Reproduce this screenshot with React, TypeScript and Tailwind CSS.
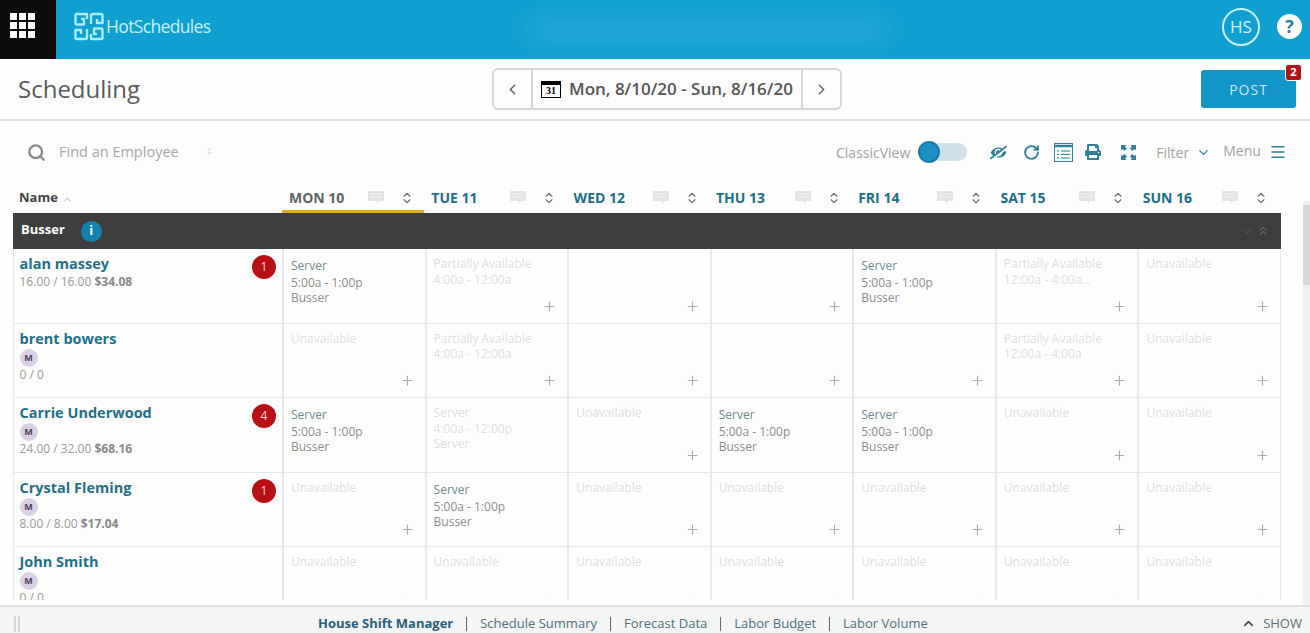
import { ChevronDown, ChevronLeft, ChevronRight, ChevronUp, ChevronsUp, ChevronsUpDown, Menu, Plus, RotateCw, Search } from "lucide-react";
import { FaEyeSlash, FaPrint } from "react-icons/fa";

type Cell =
  | { kind: "shift" }
  | { kind: "faint"; lines: string[]; plus: boolean }
  | { kind: "empty" };

const shift: Cell = { kind: "shift" };
const empty: Cell = { kind: "empty" };
const un: Cell = { kind: "faint", lines: ["Unavailable"], plus: true };

const days = ["MON 10", "TUE 11", "WED 12", "THU 13", "FRI 14", "SAT 15", "SUN 16"];

const rows: { name: string; m: boolean; hours: string; pay?: string; badge?: number; cells: Cell[] }[] = [
  {
    name: "alan massey",
    m: false,
    hours: "16.00 / 16.00",
    pay: "$34.08",
    badge: 1,
    cells: [
      shift,
      { kind: "faint", lines: ["Partially Available", "4:00a - 12:00a"], plus: true },
      empty,
      empty,
      shift,
      { kind: "faint", lines: ["Partially Available", "12:00a - 4:00a..."], plus: true },
      un,
    ],
  },
  {
    name: "brent bowers",
    m: true,
    hours: "0 / 0",
    cells: [
      un,
      { kind: "faint", lines: ["Partially Available", "4:00a - 12:00a"], plus: true },
      empty,
      empty,
      empty,
      { kind: "faint", lines: ["Partially Available", "12:00a - 4:00a"], plus: true },
      un,
    ],
  },
  {
    name: "Carrie Underwood",
    m: true,
    hours: "24.00 / 32.00",
    pay: "$68.16",
    badge: 4,
    cells: [
      shift,
      { kind: "faint", lines: ["Server", "4:00a - 12:00p", "Server"], plus: false },
      un,
      shift,
      shift,
      un,
      un,
    ],
  },
  {
    name: "Crystal Fleming",
    m: true,
    hours: "8.00 / 8.00",
    pay: "$17.04",
    badge: 1,
    cells: [un, shift, un, un, un, un, un],
  },
  {
    name: "John Smith",
    m: true,
    hours: "0 / 0",
    cells: [un, un, un, un, un, un, un],
  },
];

const footerLinks = ["Schedule Summary", "Forecast Data", "Labor Budget", "Labor Volume"];

function Logo() {
  return (
    <svg width="30" height="29" viewBox="0 0 30 29" fill="none" stroke="#a9edf6" strokeWidth="2.4" strokeLinejoin="round">
      <path d="M13 7V2H3a1.5 1.5 0 0 0-1.500 1.500V11a1.500 1.500 0 0 0 1.500 1.500h7V7H7" />
      <path d="M17 12V3.500A1.500 1.500 0 0 1 18.500 2H27a1.500 1.500 0 0 1 1.500 1.500V11H23V7" />
      <path d="M13 17v8.500a1.500 1.500 0 0 1-1.500 1.500H3a1.500 1.500 0 0 1-1.500-1.500V18H7v4" />
      <path d="M17 22v5h10a1.500 1.500 0 0 0 1.500-1.500V18a1.500 1.500 0 0 0-1.500-1.500h-7V22h3" />
    </svg>
  );
}

function NoteIcon() {
  return (
    <svg width="16" height="14" viewBox="0 0 16 14" className="shrink-0">
      <path d="M0 0h16v10h-5l-1 3-2-3H0z" fill="#e2e4e4" />
      <path d="M2 3h12M2 6h12" stroke="#f3f3f3" strokeWidth="1" />
    </svg>
  );
}

function ListIcon() {
  return (
    <svg width="19" height="19" viewBox="0 0 19 19" fill="none" stroke="#2f7f96" strokeWidth="1">
      <rect x="0.500" y="0.500" width="18" height="18" />
      <path d="M1 3h17" strokeWidth="2.500" />
      <path d="M3 8h2M7 8h9M3 11.500h2M7 11.500h9M3 15h2M7 15h9" />
    </svg>
  );
}

function ExpandIcon() {
  return (
    <svg width="15" height="15" viewBox="0 0 15 15" fill="#2f7f96">
      <path d="M0 0h5.500L4 1.500 6 3.500 3.500 6 1.500 4 0 5.500z" />
      <path d="M15 0v5.500L13.500 4 11.500 6 9 3.500 11 1.500 9.500 0z" />
      <path d="M0 15V9.500L1.500 11 3.500 9 6 11.500 4 13.500 5.500 15z" />
      <path d="M15 15H9.500L11 13.500 9 11.500 11.500 9 13.500 11 15 9.500z" />
    </svg>
  );
}

function DayCell({ cell }: { cell: Cell }) {
  return (
    <div className="flex flex-col border-l-2 border-[#e8e8e8] pl-[7px] pr-[10px] pb-[9px] text-[12px] leading-[15.500px]">
      {cell.kind === "shift" && (
        <div className="pt-[9px] leading-[15px] text-[#8c8c8c]">
          <div className="text-[#6d8a90]">Server</div>
          <div className="mt-[2px]">5:00a - 1:00p</div>
          <div>Busser</div>
        </div>
      )}
      {cell.kind === "faint" && (
        <div className="truncate pt-[7px] text-[#dedede]">
          {cell.lines.map((line) => (
            <div key={line} className="truncate">
              {line}
            </div>
          ))}
        </div>
      )}
      {(cell.kind === "empty" || (cell.kind === "faint" && cell.plus)) && (
        <Plus size={15} strokeWidth={1.8} className="mt-auto self-end text-[#aaaaaa]" />
      )}
    </div>
  );
}

export default function App() {
  return (
    <div className="flex h-[633px] w-[1310px] flex-col overflow-hidden bg-[#fdfdfd] font-['Open_Sans',sans-serif] text-[#555]">
      {/* top bar */}
      <header className="flex h-[59px] shrink-0 items-center bg-[#0f9fd0]">
        <div className="flex h-full w-[56px] items-start bg-[#0c0c0c] pl-[10px] pt-[13px]">
          <div className="grid grid-cols-3 gap-[2px]">
            {Array.from({ length: 9 }).map((_, i) => (
              <div key={i} className="h-[7px] w-[7px] bg-white" />
            ))}
          </div>
        </div>
        <div className="mb-[6px] ml-[18px] flex items-center gap-[2px]">
          <Logo />
          <span className="text-[17.500px] tracking-[-0.65px] text-[#c8f1f8]">HotSchedules</span>
        </div>
        <div className="ml-[318px] h-[24px] w-[360px] bg-white/10 blur-md" />
        <div className="mb-[6px] ml-auto mr-[8px] flex items-center gap-[17px]">
          <div className="flex h-[38px] w-[38px] items-center justify-center rounded-full border-2 border-[#c8f3f5] text-[17px] text-[#d8f6f8]">
            HS
          </div>
          <div className="flex h-[25px] w-[25px] items-center justify-center rounded-full bg-white text-[18px] font-bold text-[#2c7d98]">
            ?
          </div>
        </div>
      </header>

      {/* title row */}
      <div className="flex h-[62px] shrink-0 items-center border-b-2 border-[#dcdcdc] pl-[18px]">
        <h1 className="w-[474px] text-[24px] text-[#5a5a5a]">Scheduling</h1>
        <div className="flex h-[42px] w-[350px] items-stretch rounded-[6px] border-2 border-[#d6d6d6]">
          <div className="flex w-[37px] items-center justify-center text-[#666]">
            <ChevronLeft size={17} strokeWidth={2.2} />
          </div>
          <div className="flex flex-1 items-center gap-[8px] border-x-2 border-[#d6d6d6] pl-[8px]">
            <div className="flex h-[17px] w-[20px] flex-col border border-black border-t-[4px] text-center font-['Liberation_Serif',serif] text-[10px] font-bold leading-[12px] text-black">
              31
            </div>
            <span className="whitespace-nowrap text-[17px] font-semibold text-[#555]">Mon, 8/10/20 - Sun, 8/16/20</span>
          </div>
          <div className="flex w-[37px] items-center justify-center text-[#666]">
            <ChevronRight size={17} strokeWidth={2.2} />
          </div>
        </div>
        <div className="relative ml-auto mr-[14px] flex h-[38px] w-[95px] items-center justify-center rounded-[3px] bg-[#1295c8] text-[14px] font-medium tracking-[1px] text-[#cdeaf5]">
          POST
          <div className="absolute -right-[6px] -top-[6px] flex h-[17px] w-[17px] items-center justify-center rounded-[3px] border border-white bg-[#b0151b] text-[11px] font-bold tracking-normal text-white">
            2
          </div>
        </div>
      </div>

      {/* toolbar */}
      <div className="flex h-[64px] shrink-0 items-center pb-[2px] pl-[27px]">
        <Search size={19} strokeWidth={3} className="text-[#8a8a8a]" />
        <span className="ml-[13px] w-[148px] text-[14.500px] text-[#a8a8a8]">Find an Employee</span>
        <span className="w-[20px] text-[10px] text-[#dfdfdf]">F</span>
        <span className="ml-[609px] text-[14px] text-[#a3a3a3]">ClassicView</span>
        <div className="ml-[8px] flex items-center">
          <div className="z-10 h-[22px] w-[22px] rounded-full border-2 border-[#1a7cab] bg-[#1a90c6]" />
          <div className="-ml-[14px] h-[18px] w-[41px] rounded-r-full bg-[#cfe2ea]" />
        </div>
        <FaEyeSlash size={17} className="ml-[23px] -scale-x-100 text-[#2f7f96]" />
        <RotateCw size={17} strokeWidth={2.6} className="ml-[16px] text-[#2f7f96]" />
        <div className="ml-[14px]">
          <ListIcon />
        </div>
        <FaPrint size={16} className="ml-[12px] text-[#2f7f96]" />
        <div className="ml-[20px]">
          <ExpandIcon />
        </div>
        <span className="ml-[20px] text-[14px] text-[#a3a3a3]">Filter</span>
        <ChevronDown size={15} strokeWidth={2} className="ml-[7px] text-[#2f7f96]" />
        <span className="mb-[3px] ml-[12px] text-[14px] text-[#a3a3a3]">Menu</span>
        <Menu size={18} strokeWidth={2} className="ml-[8px] text-[#2f7f96]" />
      </div>

      <div className="flex min-h-0 flex-1">
        <div className="ml-[13px] w-[1268px] shrink-0">
          {/* column headers */}
          <div className="grid h-[28px] grid-cols-[269px_repeat(7,142.300px)]">
            <div className="flex items-center gap-[4px] pb-[3px] pl-[6px] text-[13px] font-bold text-[#444]">
              Name
              <ChevronUp size={11} strokeWidth={2} className="mt-[3px] text-[#999]" />
            </div>
            {days.map((day, i) => (
              <div
                key={day}
                className={
                  i === 0
                    ? "flex items-center border-b-[3px] border-[#e2a832] pl-[7px] text-[14px] font-bold text-[#5d6365]"
                    : "flex items-center border-b-[3px] border-transparent pl-[7px] text-[14px] font-bold text-[#206e86]"
                }
              >
                <span className="w-[79px] whitespace-nowrap">{day}</span>
                <NoteIcon />
                <ChevronsUpDown size={14} strokeWidth={2} className="ml-[16px] text-[#666]" />
              </div>
            ))}
          </div>

          {/* group row */}
          <div className="flex h-[36px] items-center bg-[#3e3e3e] pl-[8px] pr-[11px]">
            <span className="mb-[2px] text-[13px] font-bold text-white">Busser</span>
            <div className="ml-[16px] flex h-[21px] w-[21px] items-center justify-center rounded-full bg-[#1283ae] text-[13px] font-bold text-white">
              i
            </div>
            <ChevronDown size={13} className="ml-auto text-white/10" />
            <ChevronsUp size={14} className="ml-[2px] text-white/20" />
          </div>

          {/* employee rows */}
          <div className="h-[351px] overflow-hidden">
            {rows.map((row) => (
              <div key={row.name} className="grid h-[74.500px] grid-cols-[268px_repeat(7,1fr)] border-b border-l border-r border-[#e6e6e6]">
                <div className="flex items-start justify-between pl-[5.500px] pr-[6px] pt-[5px]">
                  <div>
                    <div className="text-[14.500px] font-bold leading-[20px] text-[#236f85]">{row.name}</div>
                    {row.m && (
                      <div className="flex h-[18px] w-[18px] items-center justify-center rounded-full bg-[#dcd0e4] text-[9px] font-bold text-[#4b3f62]">
                        M
                      </div>
                    )}
                    <div className="text-[12px] leading-[16px] text-[#999]">
                      {row.hours} {row.pay && <b className="font-bold text-[#888]">{row.pay}</b>}
                    </div>
                  </div>
                  {row.badge && (
                    <div className="mt-[1px] flex h-[24px] w-[24px] items-center justify-center rounded-full bg-[#b80f14] text-[12px] text-[#f5dcdc]">
                      {row.badge}
                    </div>
                  )}
                </div>
                {row.cells.map((cell, i) => (
                  <DayCell key={i} cell={cell} />
                ))}
              </div>
            ))}
          </div>
        </div>
        {/* scrollbar */}
        <div className="ml-[22px] mt-[16px] h-[410px] w-[7px] bg-[#f0f0f0]">
          <div className="mt-[4px] h-[80px] bg-[#d8d8d8]" />
        </div>
      </div>

      {/* footer */}
      <footer className="flex h-[28px] shrink-0 items-center border-t-2 border-[#dedede] bg-[#f4f5f5] pl-[14px] pr-[8px] pt-[7px] text-[13px] text-[#4f6f7c]">
        <div className="flex h-[16px] w-[6px] justify-between">
          <div className="w-[2px] bg-[#d5d5d5]" />
          <div className="w-[2px] bg-[#d5d5d5]" />
        </div>
        <span className="ml-[298px] font-bold text-[#285f78]">House Shift Manager</span>
        {footerLinks.map((link) => (
          <div key={link} className="flex items-center">
            <div className="mx-[13px] h-[14px] w-px bg-[#666]" />
            <span>{link}</span>
          </div>
        ))}
        <ChevronUp size={15} strokeWidth={2.4} className="ml-auto text-[#444]" />
        <span className="ml-[7px] text-[#5c6f76]">SHOW</span>
      </footer>
    </div>
  );
}
